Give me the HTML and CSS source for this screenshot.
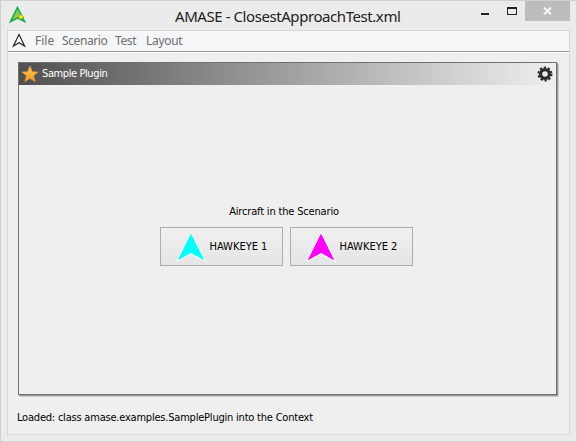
FILE: index.html
```html
<!DOCTYPE html>
<html lang="en">
<head>
<meta charset="utf-8">
<title>AMASE - ClosestApproachTest.xml</title>
<link rel="stylesheet" href="styles.css">
</head>
<body>
<div class="window">
  <header class="titlebar">
    <svg class="app-icon" width="18" height="18" viewBox="0 0 18 18"><path d="M8.5 1.5L15.5 15.5L8.5 12L1.5 15.5Z" fill="#8ccb4c" stroke="#17ad52" stroke-width="1.6"/><path d="M10.5 8.5L15 10.8L10.5 13.2Z" fill="#ff0" stroke="#c9ad10" stroke-width=".8"/></svg>
    <h1 class="title">AMASE - ClosestApproachTest.xml</h1>
    <div class="controls">
      <span class="minimize"></span>
      <span class="maximize"></span>
      <span class="close"><svg width="9" height="8" viewBox="0 0 9 8"><path d="M1 .5L8 7.5M8 .5L1 7.5" stroke="#fff" stroke-width="1.8"/></svg></span>
    </div>
  </header>
  <main class="content">
    <nav class="menubar">
      <svg class="menu-icon" width="14" height="15" viewBox="0 0 14 15"><path d="M7 1.5L12.6 13L7 9.8L1.4 13Z" fill="#fff" stroke="#222" stroke-width="1.2"/></svg>
      <span class="menu file">File</span><span class="menu scenario">Scenario</span><span class="menu test">Test</span><span class="menu layout">Layout</span>
    </nav>
    <section class="panel">
      <div class="panel-head">
        <svg width="18" height="18" viewBox="0 0 18 18"><defs><linearGradient id="gold" x2="0" y2="1"><stop stop-color="#ffc95c"/><stop offset="1" stop-color="#f09a20"/></linearGradient></defs><path d="M9 1L11.3 6.7L17 7L12.6 10.8L14.2 16.6L9 13.4L3.8 16.6L5.4 10.8L1 7L6.7 6.7Z" fill="url(#gold)" stroke="#e49429" stroke-width=".7"/></svg>
        <span class="panel-title">Sample Plugin</span>
        <svg class="gear" width="16" height="16" viewBox="-8 -8 16 16"><circle r="4.4" fill="none" stroke="#302b2b" stroke-width="3.2"/><circle r="6.5" fill="none" stroke="#302b2b" stroke-width="2" stroke-dasharray="2.3 1.784"/></svg>
      </div>
      <div class="panel-body">
        <div class="caption">Aircraft in the Scenario</div>
        <div class="aircraft">
          <button><svg width="32" height="32" viewBox="0 0 32 32"><path d="M16 1L32 32L16 23L0 32Z" fill="#fff"/><path d="M16 2.5L29.5 29.5L16 22L2.5 29.5Z" fill="#0ff"/></svg><span>HAWKEYE 1</span></button>
          <button><svg width="32" height="32" viewBox="0 0 32 32"><path d="M16 1L32 32L16 23L0 32Z" fill="#fff"/><path d="M16 2.5L29.5 29.5L16 22L2.5 29.5Z" fill="#f0f"/></svg><span>HAWKEYE 2</span></button>
        </div>
      </div>
    </section>
    <footer class="status"><span>Loaded: class amase.examples.SamplePlugin into the Context</span></footer>
  </main>
</div>
</body>
</html>
```
FILE: styles.css
```css
* { box-sizing: border-box; }
body { margin: 0; font: 11px/14px "DejaVu Sans Condensed", "DejaVu Sans", sans-serif; font-stretch: condensed; color: #000; }
svg { display: block; flex: none; }
.window { width: 577px; height: 442px; padding: 0 6px 6px; border: 1px solid #d0d0d0; background: #ebebeb; display: flex; flex-direction: column; }
.titlebar { height: 29px; flex: none; display: flex; align-items: flex-start; }
.app-icon { margin: 5px 0 0 2px; }
.title { margin: 3px 0 0 148px; width: 227px; font: 400 15px/24px "Noto Sans", sans-serif; letter-spacing: -.43px; white-space: nowrap; color: #222; }
.controls { display: flex; margin-left: auto; }
.minimize { width: 8px; height: 2px; background: #222; margin: 12px 18px 0 0; }
.maximize { width: 10px; height: 8px; border: 1px solid #222; border-top-width: 2px; margin: 6px 8px 0 0; }
.close { width: 45px; height: 20px; background: #bcbcbc; display: flex; align-items: center; justify-content: center; }
.content { flex: 1; border: 1px solid #d9d9d9; background: #efefef; display: flex; flex-direction: column; }
.menubar { height: 21px; flex: none; display: flex; background: #f5f6f7; border-bottom: 1px solid #999; box-shadow: 0 1px #fff; font: 12px/20px "Noto Sans", sans-serif; letter-spacing: -.4px; color: #6d6d6d; }
.menu-icon { margin: 2px 0 0 4px; }
.menu { white-space: nowrap; }
.file { margin-left: 9px; width: 27px; letter-spacing: 0; }
.scenario { width: 53px; }
.test { width: 31px; }
.layout { letter-spacing: -.3px; }
.panel { margin: 10px 12px 0 10px; height: 333px; flex: none; border: 1px solid #707070; box-shadow: 1px 1px #999, 2px 2px #ccc; display: flex; flex-direction: column; }
.panel-head { height: 22px; display: flex; align-items: center; padding: 0 3px 0 2px; background: linear-gradient(90deg, #505050, #efefef); color: #fff; }
.panel-title { margin-left: 3px; letter-spacing: -.4px; white-space: nowrap; }
.gear { margin-left: auto; }
.panel-body { flex: 1; padding: 120px 3px 0 0; display: flex; flex-direction: column; align-items: center; }
.caption { margin-right: 4px; letter-spacing: -.17px; white-space: nowrap; }
.aircraft { display: flex; gap: 7px; margin-top: 8px; }
button { width: 123px; height: 39px; border: 1px solid #adadad; background: linear-gradient(#f0f0f0, #e5e5e5); padding: 0 0 0 14px; display: flex; align-items: center; gap: 3px; font: inherit; color: inherit; white-space: nowrap; }
.status { margin: 16px 0 0 9px; letter-spacing: -.21px; white-space: nowrap; }
```
